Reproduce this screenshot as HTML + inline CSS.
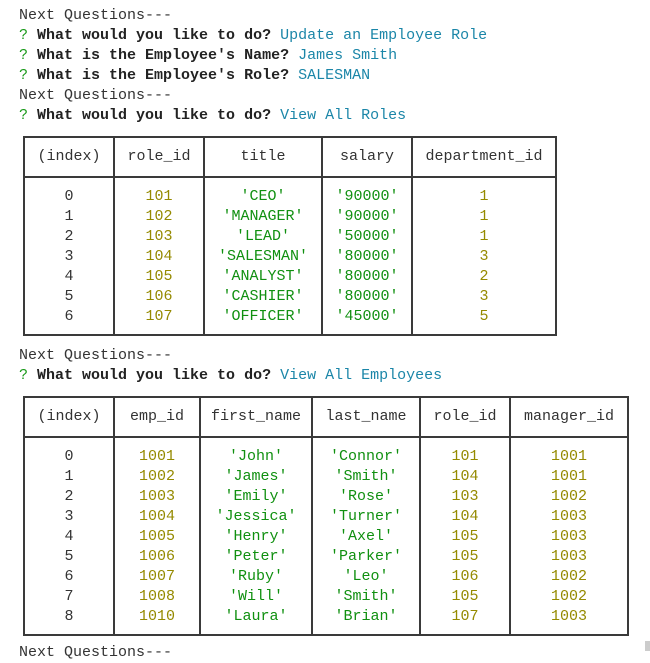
<!DOCTYPE html>
<html><head><meta charset="utf-8"><style>
*{margin:0;padding:0;box-sizing:border-box}
body{width:650px;height:651px;background:#fff;font-family:"Liberation Mono",monospace;font-size:15px;color:#333;position:relative;overflow:hidden}
.l{position:absolute;left:19px;line-height:20px;white-space:pre}
b{color:#222}
.q{color:#1a9a1a}
.c{color:#1b86a8}
.n{color:#958a00}
.s{color:#109010}
table{position:absolute;left:23px;border-collapse:collapse;line-height:20px;table-layout:fixed}
td{border:2px solid #3a3a3a;text-align:center;vertical-align:top}
tr.h td{height:40px;vertical-align:middle}
tr.d td{padding:9px 0 7px}
</style></head><body>
<div class="l" style="top:6px">Next Questions---</div>
<div class="l" style="top:26px"><span class="q">?</span> <b>What would you like to do?</b> <span class="c">Update an Employee Role</span></div>
<div class="l" style="top:46px"><span class="q">?</span> <b>What is the Employee's Name?</b> <span class="c">James Smith</span></div>
<div class="l" style="top:66px"><span class="q">?</span> <b>What is the Employee's Role?</b> <span class="c">SALESMAN</span></div>
<div class="l" style="top:86px">Next Questions---</div>
<div class="l" style="top:106px"><span class="q">?</span> <b>What would you like to do?</b> <span class="c">View All Roles</span></div>

<table style="top:136px;width:532px">
<colgroup><col style="width:90px"><col style="width:90px"><col style="width:118px"><col style="width:90px"><col style="width:144px"></colgroup>
<tr class="h"><td>(index)</td><td>role_id</td><td>title</td><td>salary</td><td>department_id</td></tr>
<tr class="d"><td>0<br>1<br>2<br>3<br>4<br>5<br>6</td>
<td class="n">101<br>102<br>103<br>104<br>105<br>106<br>107</td>
<td class="s">'CEO'<br>'MANAGER'<br>'LEAD'<br>'SALESMAN'<br>'ANALYST'<br>'CASHIER'<br>'OFFICER'</td>
<td class="s">'90000'<br>'90000'<br>'50000'<br>'80000'<br>'80000'<br>'80000'<br>'45000'</td>
<td class="n">1<br>1<br>1<br>3<br>2<br>3<br>5</td></tr>
</table>

<div class="l" style="top:346px">Next Questions---</div>
<div class="l" style="top:366px"><span class="q">?</span> <b>What would you like to do?</b> <span class="c">View All Employees</span></div>

<table style="top:396px;width:604px">
<colgroup><col style="width:90px"><col style="width:86px"><col style="width:112px"><col style="width:108px"><col style="width:90px"><col style="width:118px"></colgroup>
<tr class="h"><td>(index)</td><td>emp_id</td><td>first_name</td><td>last_name</td><td>role_id</td><td>manager_id</td></tr>
<tr class="d"><td>0<br>1<br>2<br>3<br>4<br>5<br>6<br>7<br>8</td>
<td class="n">1001<br>1002<br>1003<br>1004<br>1005<br>1006<br>1007<br>1008<br>1010</td>
<td class="s">'John'<br>'James'<br>'Emily'<br>'Jessica'<br>'Henry'<br>'Peter'<br>'Ruby'<br>'Will'<br>'Laura'</td>
<td class="s">'Connor'<br>'Smith'<br>'Rose'<br>'Turner'<br>'Axel'<br>'Parker'<br>'Leo'<br>'Smith'<br>'Brian'</td>
<td class="n">101<br>104<br>103<br>104<br>105<br>105<br>106<br>105<br>107</td>
<td class="n">1001<br>1001<br>1002<br>1003<br>1003<br>1003<br>1002<br>1002<br>1003</td></tr>
</table>
<div class="l" style="top:643px">Next Questions---</div>
<div style="position:absolute;left:645px;top:641px;width:6px;height:10px;background:#ccc"></div>
</body></html>
